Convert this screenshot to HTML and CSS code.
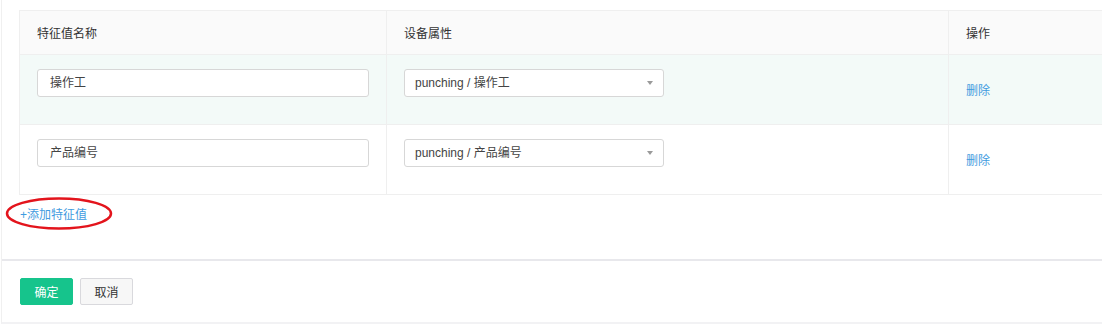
FILE: index.html
```html
<!DOCTYPE html>
<html lang="zh-CN">

<head>
    <meta charset="UTF-8">
    <title>特征值设置</title>
    <link rel="stylesheet" href="styles.css">
</head>

<body>
    <div class="page">
        <div class="form-body">
            <table class="feature-table">
                <colgroup>
                    <col class="col-name">
                    <col class="col-attr">
                    <col class="col-op">
                </colgroup>
                <thead>
                    <tr>
                        <th>特征值名称</th>
                        <th>设备属性</th>
                        <th>操作</th>
                    </tr>
                </thead>
                <tbody>
                    <tr class="row-hover">
                        <td class="cell-field"><div class="text-input">操作工</div></td>
                        <td class="cell-field">
                            <div class="select-box">
                                <span>punching / 操作工</span>
                                <span class="select-arrow"></span>
                            </div>
                        </td>
                        <td class="cell-op"><a class="link" href="#">删除</a></td>
                    </tr>
                    <tr>
                        <td class="cell-field"><div class="text-input">产品编号</div></td>
                        <td class="cell-field">
                            <div class="select-box">
                                <span>punching / 产品编号</span>
                                <span class="select-arrow"></span>
                            </div>
                        </td>
                        <td class="cell-op"><a class="link" href="#">删除</a></td>
                    </tr>
                </tbody>
            </table>

            <div class="add-row">
                <a class="link add-link" href="#">+添加特征值</a>
                <svg class="mark" width="110" height="36" viewBox="0 0 110 36">
                    <ellipse cx="55" cy="17.5" rx="52" ry="15" fill="none" stroke="#e3141c" stroke-width="2.5" />
                </svg>
            </div>
        </div>

        <div class="form-footer">
            <button class="btn btn-primary">确定</button>
            <button class="btn">取消</button>
        </div>
    </div>
</body>

</html>
```

FILE: styles.css
```css
html,
body {
    margin: 0;
    padding: 0;
    background-color: #ffffff;
    overflow: hidden;
}

body {
    font-family: "Liberation Sans", "Noto Sans CJK SC", sans-serif;
    font-size: 12px;
    color: #333333;
}

.page {
    margin-left: 1px;
    height: 322px;
    overflow: hidden;
    border-left: 1px solid #f0f0f0;
    border-bottom: 2px solid #f2f2f4;
}

.form-body {
    padding: 10px 0 0 17px;
    height: 249px;
    border-bottom: 2px solid #e8e8ec;
    overflow: hidden;
}

.feature-table {
    border-collapse: collapse;
    table-layout: fixed;
    width: 1130px;
}

.col-name {
    width: 367px;
}

.col-attr {
    width: 562px;
}

.feature-table th,
.feature-table td {
    border: 1px solid #efefef;
    padding: 0 17px;
    text-align: left;
}

.feature-table th {
    height: 43px;
    font-weight: normal;
    background-color: #fafafa;
    color: #333333;
}

.feature-table td {
    height: 69px;
}

.row-hover td {
    background-color: #f3faf8;
}

.cell-field {
    vertical-align: top;
}

.cell-op {
    vertical-align: middle;
}

.text-input,
.select-box {
    box-sizing: border-box;
    height: 28px;
    margin-top: 14px;
    padding: 0 12px;
    line-height: 26px;
    border: 1px solid #d7d7d7;
    border-radius: 3px;
    background-color: #ffffff;
    color: #444444;
}

.text-input {
    width: 332px;
}

.select-box {
    width: 260px;
    padding-left: 10px;
    display: flex;
    justify-content: space-between;
    align-items: center;
}

.select-arrow {
    width: 0;
    height: 0;
    margin-right: -2px;
    border-left: 3px solid transparent;
    border-right: 3px solid transparent;
    border-top: 4px solid #9a9a9a;
}

.link {
    color: #3f9be0;
    text-decoration: none;
}

.add-row {
    position: relative;
    margin: 12px 0 0 -17px;
    padding-left: 18px;
    height: 16px;
    line-height: 16px;
}

.mark {
    position: absolute;
    left: 2px;
    top: -11px;
}

.form-footer {
    padding: 17px 0 0 18px;
    display: flex;
    gap: 7px;
}

.btn {
    box-sizing: border-box;
    width: 53px;
    height: 27px;
    border: 1px solid #d9d9dd;
    border-radius: 2px;
    background-color: #f7f7f7;
    font-family: inherit;
    font-size: 12px;
    color: #333333;
    padding: 0;
}

.btn-primary {
    background-color: #16c48c;
    border-color: #16c48c;
    color: #ffffff;
}
```
